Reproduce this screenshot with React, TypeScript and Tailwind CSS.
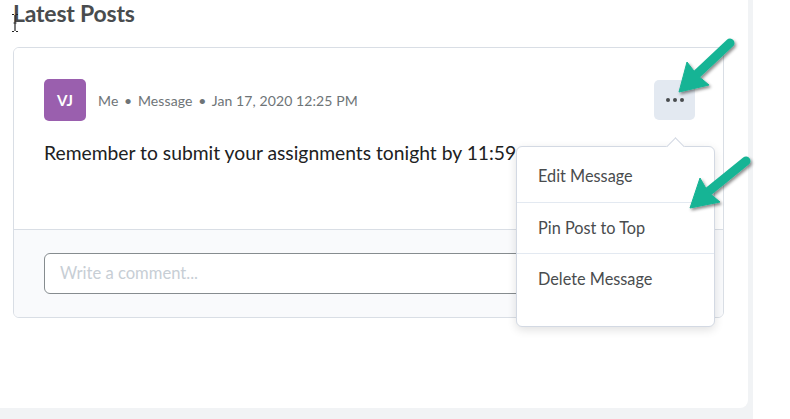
import React from "react";

export default function App() {
  const font = { fontFamily: "Lato, 'Open Sans', sans-serif" };
  return (
    <div className="relative w-[790px] h-[419px] bg-white overflow-hidden" style={font}>
      <div className="w-[753px] h-[419px] bg-[#f1f3f5] pr-[5px] pb-[11px]">
        <div className="h-[408px] w-[748px] bg-white rounded-br-[8px] pl-[13px] pr-[24px]">
          <h2 className="text-[23px] leading-[27px] font-bold text-[#494c4e] tracking-[-0.2px]">Latest Posts</h2>
          <div className="mt-[20px] w-[711px] border border-[#d9dee5] rounded-[6px] overflow-hidden">
            <div className="h-[181px] bg-white pt-[31px] pl-[30px] pr-[28px]">
              <div className="flex items-center">
                <div className="w-[42px] h-[42px] rounded-[5px] bg-[#9a5fae] flex items-center justify-center text-white font-bold text-[15px]">
                  VJ
                </div>
                <div className="ml-[12px] text-[14px] text-[#6e7477] flex-1 tracking-[0.1px]">
                  Me <span className="mx-[2px]">•</span> Message <span className="mx-[2px]">•</span> Jan 17, 2020 12:25 PM
                </div>
                <div className="w-[41px] h-[40px] rounded-[5px] bg-[#e3e9f1] flex items-center justify-center gap-[3px]">
                  <span className="w-[4px] h-[4px] rounded-full bg-[#494c4e]" />
                  <span className="w-[4px] h-[4px] rounded-full bg-[#494c4e]" />
                  <span className="w-[4px] h-[4px] rounded-full bg-[#494c4e]" />
                </div>
              </div>
              <p className="mt-[18px] text-[19.3px] leading-[28px] text-[#202122] whitespace-nowrap">
                Remember to submit your assignments tonight by 11:59 PM.
              </p>
            </div>
            <div className="border-t border-[#d9dee5] bg-[#f9fafc] px-[30px] py-[23px]">
              <div className="h-[41px] rounded-[6px] border border-[#868c8f] bg-white flex items-center px-[15px] text-[16.6px] text-[#c7ced5]">
                Write a comment...
              </div>
            </div>
          </div>
        </div>
      </div>

      {/* I-beam cursor */}
      <svg className="absolute left-[10px] top-[13px]" width="10" height="20" viewBox="0 0 10 20">
        <path d="M2 1.5 H4 M6 1.5 H8 M5 2 V18 M2 18.5 H4 M6 18.5 H8 M3.5 10 H6.5" stroke="#222" strokeWidth="1.2" fill="none" />
      </svg>

      {/* Dropdown menu */}
      <div className="absolute left-[516px] top-[146px] w-[199px] h-[181px] bg-white border border-[#d3d9e3] rounded-[6px] shadow-[0_3px_10px_rgba(0,0,0,0.12)] pt-[4px]">
        <div className="absolute -top-[7px] left-[152px] w-[13px] h-[13px] bg-white border-l border-t border-[#d3d9e3] rotate-45" />
        <div className="relative h-[51px] flex items-center pl-[21px] text-[16.3px] text-[#494c4e]">Edit Message</div>
        <div className="h-px bg-[#e3e9f1]" />
        <div className="h-[50px] flex items-center pl-[21px] text-[16.3px] text-[#494c4e]">Pin Post to Top</div>
        <div className="h-px bg-[#e3e9f1]" />
        <div className="h-[51px] flex items-center pl-[21px] text-[16.3px] text-[#494c4e]">Delete Message</div>
      </div>

      {/* Green annotation arrows */}
      <svg className="absolute inset-0 pointer-events-none" width="790" height="419" viewBox="0 0 790 419">
        <defs>
          <filter id="sh" x="-20%" y="-20%" width="140%" height="140%">
            <feDropShadow dx="1.5" dy="2" stdDeviation="1.5" floodColor="#000" floodOpacity="0.45" />
          </filter>
        </defs>
        <g filter="url(#sh)" fill="#17b495" stroke="#17b495">
          <line x1="730" y1="43" x2="697" y2="74" strokeWidth="9" strokeLinecap="round" />
          <polygon points="679,92 687,62 697,75 709,85" strokeWidth="1" strokeLinejoin="round" />
          <line x1="746" y1="161" x2="709" y2="191" strokeWidth="9" strokeLinecap="round" />
          <polygon points="690,208 700,178 708,192 720,202" strokeWidth="1" strokeLinejoin="round" />
        </g>
      </svg>
    </div>
  );
}
